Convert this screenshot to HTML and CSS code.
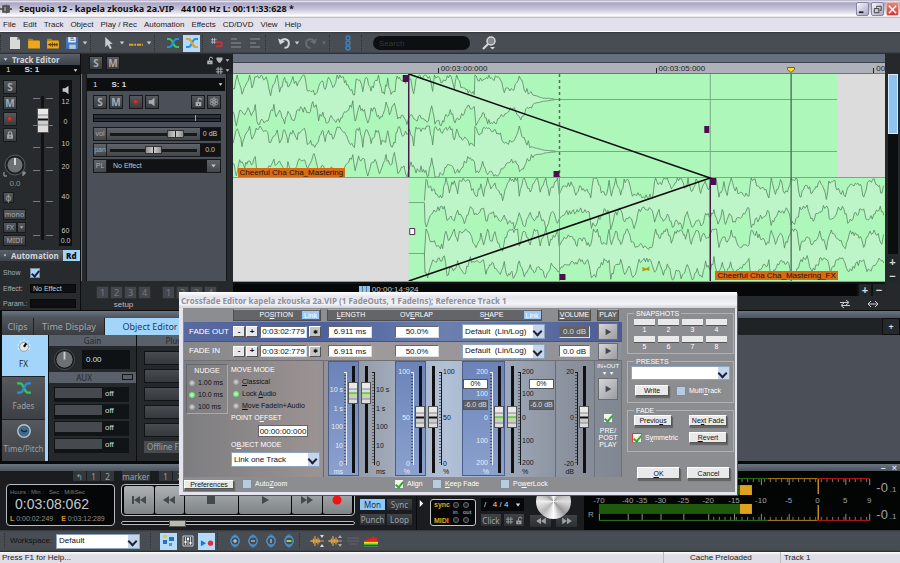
FILE: index.html
```html
<!DOCTYPE html>
<html lang="en">
<head>
<meta charset="utf-8">
<meta name="viewport" content="width=device-width, initial-scale=1">
<title>Sequoia 12 - kapela zkouska 2a.VIP</title>
<link rel="stylesheet" href="styles.css">
</head>
<body>
<svg class="defs" aria-hidden="true">
  <symbol id="i-lock" viewBox="0 0 12 12"><path d="M3 6h7v5H3z" fill="currentColor"/><path d="M6 6V3.500a2 2 0 0 1 4 0V4" fill="none" stroke="currentColor" stroke-width="1.300"/><path d="M6 8h1v1.500H6z" fill="#222"/></symbol>
  <symbol id="i-locked" viewBox="0 0 12 12"><path d="M2.500 5.500h7v5h-7z" fill="currentColor"/><path d="M4 6V4a2 2 0 0 1 4 0v2" fill="none" stroke="currentColor" stroke-width="1.300"/><path d="M5.500 7h1v2h-1z" fill="#222"/></symbol>
  <symbol id="i-speaker" viewBox="0 0 12 12"><path d="M2 4h3l4-3v10L5 8H2z" fill="currentColor"/></symbol>
  <symbol id="i-rec" viewBox="0 0 12 12"><circle cx="6" cy="6" r="3.200" fill="#a32b2b"/><circle cx="5.500" cy="5.500" r="1.500" fill="#c8443e"/></symbol>
  <symbol id="i-cross" viewBox="0 0 14 12"><path d="M1 2h2.500C7 2 7 10 10.500 10H13" fill="none" stroke="#35c95a" stroke-width="2"/><path d="M1 10h2.500C7 10 7 2 10.500 2H13" fill="none" stroke="#2a8fe0" stroke-width="2"/></symbol>
  <symbol id="i-fold" viewBox="0 0 8 8"><path d="M1 2h6L4 6z" fill="currentColor"/></symbol>
  <symbol id="i-grid" viewBox="0 0 10 10"><path d="M3.500 1v8M6.500 1v8M1 3.500h8M1 6.500h8" stroke="currentColor" fill="none"/></symbol>
  <symbol id="i-folder" viewBox="0 0 13 12"><path d="M1 2h4l1 1.500h5V5H1z" fill="#b87a08"/><path d="M1 4h11v7H1z" fill="#eaa81a"/></symbol>
  <symbol id="i-rew" viewBox="0 0 14 10"><path d="M7 1v8L1 5zM13 1v8L7 5z" fill="currentColor"/></symbol>
  <symbol id="i-fwd" viewBox="0 0 14 10"><path d="M1 1v8l6-4zM7 1v8l6-4z" fill="currentColor"/></symbol>
  <symbol id="i-play" viewBox="0 0 10 10"><path d="M2 1v8l7-4z" fill="currentColor"/></symbol>
  <symbol id="i-lens" viewBox="0 0 12 14"><path d="M6 0l4 3H2zM6 14l4-3H2z" fill="#3f83bf"/><circle cx="6" cy="7" r="4.200" fill="#454a51" stroke="#4a94d2" stroke-width="1.400"/></symbol>
  <symbol id="i-wave" viewBox="0 0 14 12"><path d="M0 6h14M2 5v2M3.500 3.500v5M5 1v10M6.500 4v4M8 2.500v7M9.500 4.500v3" stroke="#e0a245" stroke-width="1.200"/></symbol>
</svg>

<div class="app">
  <header class="titlebar">
    <svg class="app-mark" viewBox="0 0 12 12"><path d="M0 6h4M8 6h4M3 3h6v6H3z" stroke="#444" fill="#888" stroke-width="1.500"/><path d="M6 1l5 5-5 5z" fill="#555"/></svg>
    <h1>Sequoia 12 - kapela zkouska 2a.VIP &nbsp; 44100 Hz L: 00:11:33:628 *</h1>
    <div class="window-buttons">
      <button aria-label="Minimize"><svg viewBox="0 0 12 12"><path d="M2 9h5" stroke="#222" stroke-width="2"/></svg></button>
      <button aria-label="Restore"><svg viewBox="0 0 12 12"><path d="M5 4V2.500h5V7H8.500M2.500 5h5v4.500h-5z" stroke="#333" fill="none"/></svg></button>
      <button class="close" aria-label="Close"><svg viewBox="0 0 12 12"><path d="M2 2l8 8M10 2l-8 8" stroke="#fff" stroke-width="1.600"/></svg></button>
    </div>
  </header>
  <nav class="menubar">
    <a href="#">File</a><a href="#">Edit</a><a href="#">Track</a><a href="#">Object</a><a href="#">Play / Rec</a><a href="#">Automation</a><a href="#">Effects</a><a href="#">CD/DVD</a><a href="#">View</a><a href="#">Help</a>
  </nav>

  <div class="toolbar">
    <i class="grip"></i>
    <button aria-label="New"><svg viewBox="0 0 12 14"><path d="M1 1h7l3 3v9H1z" fill="#d9dad8"/><path d="M8 1v3h3z" fill="#8e9092"/></svg></button>
    <button aria-label="Open"><svg viewBox="0 0 13 12"><use href="#i-folder"/></svg></button>
    <button aria-label="Open audio"><svg viewBox="0 0 13 12"><use href="#i-folder"/><path d="M2 7.500h9M4 6v3M6 5.500v4M8 6v3M10 6v3" stroke="#6a4300"/></svg></button>
    <button aria-label="Save"><svg viewBox="0 0 13 13"><path d="M1 1h11v11H1z" fill="#3b78c8"/><path d="M3 1h7v5H3z" fill="#e8edf4"/><path d="M4 8h6v4H4z" fill="#b9c6d6"/><path d="M5 2h3M5 4h4" stroke="#5a6f8c"/></svg></button>
    <svg class="caret" viewBox="0 0 8 8"><use href="#i-fold"/></svg>
    <i class="grip wide"></i>
    <button aria-label="Pointer"><svg viewBox="0 0 12 15"><path d="M2 1v11l2.500-2.500L7 14l2-1-2.300-4.300H10z" fill="#c9ccd0"/></svg></button>
    <svg class="caret" viewBox="0 0 8 8"><use href="#i-fold"/></svg>
    <button aria-label="Range"><svg viewBox="0 0 16 12"><path d="M0 8h16" stroke="#e0a030" stroke-width="2.500" stroke-dasharray="5 1 2 1"/></svg></button>
    <svg class="caret" viewBox="0 0 8 8"><use href="#i-fold"/></svg>
    <i class="grip wide"></i>
    <button aria-label="Crossfade"><svg viewBox="0 0 14 12"><use href="#i-cross"/></svg></button>
    <button class="on" aria-label="Auto crossfade"><svg viewBox="0 0 14 12"><use href="#i-cross"/><path d="M1 2h2.500C7 2 7 10 10.500 10H13" fill="none" stroke="#f0a030" stroke-width="2"/></svg></button>
    <i class="grip"></i>
    <button aria-label="Snap"><svg viewBox="0 0 17 12"><path d="M3 0v7M5.500 0v7M1 2h7M1 5h7" stroke="#b9bcc0" fill="none"/><path d="M7 5h5a2.500 2.500 0 0 1 0 5H7" fill="none" stroke="#cf3137" stroke-width="2.200"/></svg></button>
    <button aria-label="Align left"><svg viewBox="0 0 14 12"><path d="M2 2h6M2 6h10M2 10h10" stroke="#696e74" stroke-width="2"/></svg></button>
    <button aria-label="Align right"><svg viewBox="0 0 14 12"><path d="M2 2h10M2 6h6M2 10h10" stroke="#696e74" stroke-width="2"/></svg></button>
    <i class="grip wide"></i>
    <button aria-label="Undo"><svg viewBox="0 0 14 13"><path d="M1 2l2 6 5-3z" fill="#d4d6d8"/><path d="M3.500 5.500a4.300 4.300 0 1 1 4 5.800" fill="none" stroke="#d4d6d8" stroke-width="2"/></svg></button>
    <svg class="caret" viewBox="0 0 8 8"><use href="#i-fold"/></svg>
    <button aria-label="Redo"><svg viewBox="0 0 14 13"><path d="M13 2l-2 6-5-3z" fill="#676c72"/><path d="M10.500 5.500a4.300 4.300 0 1 0-4 5.800" fill="none" stroke="#676c72" stroke-width="2"/></svg></button>
    <svg class="caret off" viewBox="0 0 8 8"><use href="#i-fold"/></svg>
    <i class="grip wide"></i>
    <svg class="chain" viewBox="0 0 6 16"><g fill="none" stroke="#3e83bd" stroke-width="1.400"><circle cx="3" cy="3" r="2"/><circle cx="3" cy="8" r="2"/><circle cx="3" cy="13" r="2"/></g></svg>
    <i class="grip spaced"></i>
    <input class="search" type="search" placeholder="Search" aria-label="Search">
    <button aria-label="Find"><svg viewBox="0 0 14 14"><circle cx="9" cy="5" r="4" fill="#85898d" stroke="#d5d7d9" stroke-width="1.500"/><path d="M6 8l-5 5" stroke="#d5d7d9" stroke-width="2.200"/><path d="M8 11h5l-2.500 2.500z" fill="#d5d7d9"/></svg></button>
  </div>

  <main class="workspace">
    <aside class="track-editor">
      <h2 class="bar"><svg viewBox="0 0 8 8"><use href="#i-fold"/></svg>Track Editor</h2>
      <div class="track-pick"><span>1</span><b>S: 1</b><svg viewBox="0 0 8 8"><use href="#i-fold"/></svg></div>
      <div class="strip">
        <div class="strip-keys">
          <button class="key">S</button><button class="key">M</button>
          <button class="key" aria-label="Record"><svg viewBox="0 0 12 12"><use href="#i-rec"/></svg></button>
          <button class="key" aria-label="Lock"><svg viewBox="0 0 12 12"><use href="#i-locked"/></svg></button>
          <svg class="knob" viewBox="0 0 24 24"><circle cx="12" cy="11" r="10" fill="#1d2022" stroke="#5a5e62"/><circle cx="12" cy="11" r="7.500" fill="#6e7174"/><path d="M12 4v7" stroke="#d8dadc" stroke-width="2"/><path d="M1 18v4h3M20 22v-4h2v2h-2" stroke="#aaa" fill="none"/></svg>
          <output>0.0</output>
          <button class="key small">φ</button>
          <button class="key text">mono</button>
          <span class="pair"><button class="key text">FX</button><button class="key text" aria-label="FX menu"><svg viewBox="0 0 8 8"><use href="#i-fold"/></svg></button></span>
          <button class="key text">MIDI</button>
        </div>
        <div class="strip-fader"><input class="vr big" type="range" value="90" aria-label="Track volume"></div>
        <div class="strip-meter"><svg viewBox="0 0 12 12"><use href="#i-speaker"/></svg><span>12</span><span>0</span><span>10</span><span>20</span><span>40</span><span>60</span><span>0.0</span></div>
      </div>
      <h2 class="bar auto"><svg viewBox="0 0 8 8"><use href="#i-fold"/></svg>Automation<b>Rd</b></h2>
      <div class="auto-rows">
        <label for="show">Show</label><input class="tick blue" id="show" type="checkbox" checked>
        <label for="effect">Effect:</label><input class="dark" id="effect" type="text" value="No Effect">
        <label for="param">Param.:</label><input class="dark" id="param" type="text">
      </div>
    </aside>

    <section class="track-list">
      <div class="list-top"><button class="key">S</button><button class="key">M</button>
        <div class="list-icons"><svg viewBox="0 0 12 12"><use href="#i-lock"/></svg><svg viewBox="0 0 12 12"><path d="M2 2h8v3L7 9H5L2 5z" fill="currentColor"/></svg><svg viewBox="0 0 8 8"><use href="#i-fold"/></svg><span></span><svg viewBox="0 0 10 10"><use href="#i-grid"/></svg><svg viewBox="0 0 8 8"><use href="#i-fold"/></svg></div>
      </div>
      <div class="track-area">
      <article class="track">
        <div class="track-pick"><span>1</span><b>S: 1</b><svg viewBox="0 0 8 8"><use href="#i-fold"/></svg></div>
        <div class="track-body">
          <div class="track-keys">
            <button class="key">S</button><button class="key">M</button>
            <button class="key gap" aria-label="Record"><svg viewBox="0 0 12 12"><use href="#i-rec"/></svg></button>
            <button class="key" aria-label="Monitor"><svg viewBox="0 0 12 12"><use href="#i-speaker"/></svg></button>
            <button class="key end" aria-label="Lock"><svg viewBox="0 0 12 12"><use href="#i-lock"/></svg></button>
            <button class="key" aria-label="Freeze"><svg viewBox="0 0 12 12"><g fill="none" stroke="currentColor"><circle cx="6" cy="6" r="1.500"/><circle cx="6" cy="2.500" r="1.500"/><circle cx="6" cy="9.500" r="1.500"/><circle cx="3" cy="4.200" r="1.500"/><circle cx="9" cy="4.200" r="1.500"/><circle cx="3" cy="7.800" r="1.500"/><circle cx="9" cy="7.800" r="1.500"/></g></svg></button>
          </div>
          <div class="level"></div>
          <div class="param"><label for="vol">vol</label><input class="hr" id="vol" type="range" value="79"><output>0 dB</output></div>
          <div class="param"><label for="pan">pan</label><input class="hr" id="pan" type="range" value="50"><output>0.0</output></div>
          <div class="param fx"><label for="pl">PL</label><select id="pl"><option>No Effect</option></select><svg viewBox="0 0 8 8"><use href="#i-fold"/></svg></div>
        </div>
      </article>
      </div>
      <div class="setups"><div><button>1</button><button>2</button><button>3</button><button>4</button><span>setup</span></div><div><button>1</button><button>2</button><button>3</button><button>4</button></div></div>
    </section>

    <section class="arrange">
      <div class="overview-bar"></div>
      <div class="ruler"><span>00:03:00:000</span><span>00:03:05:000</span><span>00</span></div>
      <div class="lanes">
        <svg viewBox="0 0 653 207" preserveAspectRatio="none">
          <path class="clip" d="M0 0h605v103H0zM176 104h477v103H176z"/>
          <g id="waves"></g>
          <path class="thin" d="M320 25.500h285M320 77.500h285M176 128.500h16M176 179.500h16M478 0v104M0 103.500h653"/>
          <path class="dashes" d="M327 0v103"/>
          <path class="thin" d="M327 104v103"/>
          <path class="cut" d="M176 0v103M478 104v103"/>
          <path class="fade" d="M176 0L478 104L176 207"/>
          <path class="play" d="M559 0v207"/>
          <path class="grab" d="M170 1h6v7h-6zM321 97h6v6h-6zM472 52h5v7h-5zM478 104h6v7h-6zM327 200h6v6h-6z"/>
          <path d="M177 154.500h5v6h-5z" fill="#fff" stroke="#57285a"/>
          <path d="M410 193l4 1.500 3-2.500v5l-3-1-4 1.500z" fill="#b69b10"/>
        </svg>
        <span class="clip-name first">Cheerful Cha Cha_Mastering</span>
        <span class="clip-name second">Cheerful Cha Cha_Mastering_FX</span>
        <svg class="cursor" viewBox="0 0 8 6"><path d="M.5.5h7v2l-3.500 3-3.500-3z" fill="#f2e41c" stroke="#55500a" stroke-width=".8"/></svg>
      </div>
      <div class="h-scroll"><div class="scroll-well"><i></i><span>00:00:14:924</span></div><button aria-label="Zoom in">+</button><button aria-label="Zoom out">−</button></div>
      <div class="h-tools"><svg viewBox="0 0 12 8"><path d="M1 2.500h8M7 0l3 2.500L7 5M11 5.500H3M5 3L2 5.500 5 8" fill="none" stroke="#ccc"/></svg><svg viewBox="0 0 12 8"><path d="M2 4h8M4 1L1 4l3 3M8 1l3 3-3 3" fill="none" stroke="#ccc"/></svg></div>
    </section>
    <div class="v-scroll"><div class="v-well"><i></i></div><button aria-label="Taller tracks">+</button><button aria-label="Shorter tracks">−</button></div>
  </main>

  <section class="dock">
    <div class="dock-bar"></div>
    <div class="tabs"><button>Clips</button><button class="t-time">Time Display</button><button class="on">Object Editor</button><button class="add" aria-label="Add tab">+</button></div>
    <div class="editor">
      <nav class="side">
        <a class="on" href="#"><svg viewBox="0 0 18 18"><g fill="#d7f0ff"><circle cx="3" cy="12" r="1"/><circle cx="2.500" cy="8" r="1"/><circle cx="5" cy="4" r="1"/><circle cx="9" cy="2.500" r="1"/><circle cx="13" cy="4" r="1"/><circle cx="15.500" cy="8" r="1"/><circle cx="15" cy="12" r="1"/></g><circle cx="9" cy="10" r="5" fill="#e9e9e9" stroke="#999"/><path d="M9 10l2.500-4" stroke="#111" stroke-width="2.500"/></svg>FX</a>
        <a href="#"><svg viewBox="0 0 14 12"><use href="#i-cross"/></svg>Fades</a>
        <a href="#"><svg viewBox="0 0 18 18"><circle cx="9" cy="9" r="7" fill="#3f6a8c" stroke="#b7c0c8" stroke-width="1.600"/><path d="M5.500 7.500L9 10l3.500-1.500" stroke="#16222c" fill="none" stroke-width="1.400"/></svg>Time/Pitch</a>
      </nav>
      <div class="col gain">
        <h3>Gain</h3>
        <div class="gain-row"><svg class="knob" viewBox="0 0 24 24"><circle cx="12" cy="12" r="10.500" fill="#15181a" stroke="#4a4e52"/><circle cx="12" cy="12" r="8.500" fill="#6e7174"/><path d="M12 4v8" stroke="#c8cacc" stroke-width="2"/></svg><output>0.00</output></div>
        <h3>AUX<i></i></h3>
        <div class="slots"><div>off</div><div>off</div><div>off</div><div>off</div></div>
      </div>
      <div class="col plug">
        <h3>Plug-ins</h3>
        <div class="slots plain"><div></div><div></div><div></div><div></div><div></div><button>Offline FX</button></div>
      </div>
    </div>
  </section>

  <section class="transport">
    <div class="dock-bar slim"><span>–</span><span>×</span></div>
    <div class="transport-body">
      <div class="deck">
        <div class="marks"><button>↰</button><button>1</button><button>2</button><button class="gap">marker</button><button class="step">1</button><button>2</button></div>
        <div class="deck-row">
          <div class="clock"><small>Hours : Min : &nbsp; Sec : MilliSec</small><strong>0:03:08:062</strong><p><b>L</b> 0:00:02:249 <b class="e">E</b> 0:03:12:289</p></div>
          <div class="drive">
            <div class="drive-keys">
              <button aria-label="To start"><svg viewBox="0 0 16 10"><path d="M1 1h2v8H1zM9 1v8L3 5zM15 1v8L9 5z" fill="currentColor"/></svg></button>
              <button aria-label="Rewind"><svg viewBox="0 0 14 10"><use href="#i-rew"/></svg></button>
              <button class="w" aria-label="Stop"><svg viewBox="0 0 10 10"><path d="M1 1h8v8H1z" fill="currentColor"/></svg></button>
              <button class="w" aria-label="Play"><svg viewBox="0 0 10 10"><use href="#i-play"/></svg></button>
              <button aria-label="Forward"><svg viewBox="0 0 14 10"><use href="#i-fwd"/></svg></button>
              <button aria-label="Record"><svg viewBox="0 0 10 10"><circle cx="5" cy="5" r="4.500" fill="#f21310"/></svg></button>
            </div>
            <input class="jog" type="range" value="22" aria-label="Position">
          </div>
        </div>
      </div>
      <div class="modes"><button class="on">Mon</button><button>Sync</button><button>Punch</button><button>Loop</button></div>
      <div class="rule"><svg viewBox="0 0 8 8"><path d="M2 0v8l4-4z" fill="#fff"/></svg></div>
      <div class="sync"><b>sync</b><i></i><i></i><span></span><small>in</small><small>out</small><b>MIDI</b><i></i><i></i></div>
      <div class="tempo"><div class="sig"><span>/</span><span>4 / 4</span><svg viewBox="0 0 8 8"><use href="#i-fold"/></svg></div><button>Click</button><button aria-label="Grid lock"><svg viewBox="0 0 10 10"><use href="#i-grid"/></svg><svg viewBox="0 0 12 12"><use href="#i-lock"/></svg></button></div>
      <div class="wheel"><i></i><button aria-label="Jog back"><svg viewBox="0 0 14 10"><use href="#i-rew"/></svg></button><button aria-label="Jog forward"><svg viewBox="0 0 14 10"><use href="#i-fwd"/></svg></button></div>
      <div class="meters"><svg id="meters" viewBox="0 0 318 57" preserveAspectRatio="xMinYMid meet"></svg></div>
    </div>
  </section>

  <div class="toolbar lower">
    <i class="grip"></i>
    <label for="workspace">Workspace:</label>
    <span class="combo ws"><select id="workspace"><option>Default</option></select></span>
    <i class="grip wide"></i>
    <button class="on" aria-label="Tracks view"><svg viewBox="0 0 14 14"><path d="M1 1h4v3H1z" fill="#e8d020"/><path d="M1 6h4v4H1zM7 3h5v4H7z" fill="#2a6fc0"/><path d="M7 9h3v3H7z" fill="#888"/></svg></button>
    <button aria-label="Mixer"><svg viewBox="0 0 14 14"><path d="M2 2h10v10H2z" fill="none" stroke="#c9ccd0"/><path d="M4.500 3v8M7 3v8M9.500 3v8" stroke="#c9ccd0"/><path d="M3.500 8h2M6 5h2M8.500 9h2" stroke="#fff" stroke-width="2"/></svg></button>
    <button class="on" aria-label="Transport"><svg viewBox="0 0 16 14"><path d="M1 6v7l6-3.500z" fill="#1b74d0"/><circle cx="12" cy="9.500" r="3" fill="#e02d36"/></svg></button>
    <i class="grip wide"></i>
    <button class="sp" aria-label="Zoom in"><svg viewBox="0 0 12 14"><use href="#i-lens"/><path d="M4 7h4M6 5v4" stroke="#cfe4f4"/></svg></button>
    <button class="sp" aria-label="Zoom out"><svg viewBox="0 0 12 14"><use href="#i-lens"/><path d="M4 7h4" stroke="#cfe4f4"/></svg></button>
    <button class="sp" aria-label="Zoom one"><svg viewBox="0 0 12 14"><use href="#i-lens"/><path d="M6 5v4" stroke="#cfe4f4"/></svg></button>
    <button class="sp" aria-label="Zoom all"><svg viewBox="0 0 12 14"><use href="#i-lens"/><path d="M3.500 6h5v2h-5z" fill="#9bcf54"/></svg></button>
    <i class="grip wide"></i>
    <button class="sp" aria-label="Wave smaller"><svg viewBox="0 0 14 12"><use href="#i-wave"/><path d="M10 0h4l-2 3zM10 12h4l-2-3z" fill="#ddd"/></svg></button>
    <button class="sp" aria-label="Wave larger"><svg viewBox="0 0 14 12"><use href="#i-wave"/><path d="M10 3h4l-2-3zM10 9h4l-2 3z" fill="#aaa"/></svg></button>
    <button class="sp" aria-label="Lines"><svg viewBox="0 0 14 12"><path d="M1 3h12M1 6h12M3 9h8" stroke="#62676d"/></svg></button>
    <button class="sp" aria-label="Spectrum"><svg viewBox="0 0 16 12"><path d="M0 12V6l2-2 1 2 2-4 1 3 2-4 1 3 2-5 1 4 2-1 2 4v6z" fill="#e8261c"/><path d="M0 12V7h16v5z" fill="#f5df1e"/><path d="M0 9h16v3H0z" fill="#36c02c"/><path d="M0 10.500h16V12H0z" fill="#2440e0"/></svg></button>
  </div>
  <footer class="status"><span>Press F1 for Help...</span><span class="cache">Cache Preloaded</span><span class="now">Track 1</span></footer>
</div>

<div class="dialog" role="dialog" aria-labelledby="dlg-title">
  <h2 id="dlg-title">Crossfade Editor kapela zkouska 2a.VIP (1 FadeOuts, 1 FadeIns); Reference Track 1</h2>
  <form class="dlg-body" onsubmit="return false">
    <div class="dlg-main">
      <div class="dlg-grid heads"><div class="h pos"><span>PO<u>S</u>ITION</span><button>Link</button></div><div class="h len"><span><u>L</u>ENGTH</span><span>OV<u>E</u>RLAP</span><span>S<u>H</u>APE</span><button>Link</button></div><div class="h"><span><u>V</u>OLUME</span></div><div class="h"><span>PLAY</span></div></div>
      <div class="dlg-grid row out">
        <div class="where"><b>FADE OUT</b><button>-</button><button>+</button><input type="text" value="0:03:02:779" aria-label="Fade out position"><button>✱</button></div>
        <input type="text" value="6.911 ms" aria-label="Fade out length"><input type="text" value="50.0%" aria-label="Fade out overlap">
        <span class="combo"><select aria-label="Fade out shape"><option>Default &nbsp;(Lin/Log)</option></select></span>
        <input class="grey" type="text" value="0.0 dB" aria-label="Fade out volume">
        <button class="playkey" aria-label="Play fade out"><svg viewBox="0 0 10 10"><use href="#i-play"/></svg></button>
      </div>
      <div class="dlg-grid row">
        <div class="where"><b>FADE IN</b><button>-</button><button>+</button><input type="text" value="0:03:02:779" aria-label="Fade in position"><button>✱</button></div>
        <input type="text" value="6.911 ms" aria-label="Fade in length"><input type="text" value="50.0%" aria-label="Fade in overlap">
        <span class="combo"><select aria-label="Fade in shape"><option>Default &nbsp;(Lin/Log)</option></select></span>
        <input type="text" value="0.0 dB" aria-label="Fade in volume">
        <button class="playkey" aria-label="Play fade in"><svg viewBox="0 0 10 10"><use href="#i-play"/></svg></button>
      </div>
      <div class="dlg-grid controls">
        <div class="modes-col">
          <div class="nudge" role="group" aria-label="Nudge"><b>NUDGE</b><label><input type="radio" name="n">1.00 ms</label><label><input type="radio" name="n" checked>10.0 ms</label><label><input type="radio" name="n">100 ms</label></div>
          <div class="move"><b>MOVE MODE</b><label><input type="radio" name="m"><span><u>C</u>lassical</span></label><label><input type="radio" name="m" checked><span>Lock <u>A</u>udio</span></label><label><input type="radio" name="m"><span><u>M</u>ove FadeIn+Audio</span></label>
            <label class="cap" for="offset">POINT O<u>F</u>FSET</label><input id="offset" type="text" value="00:00:00:000">
            <label class="cap" for="omode">O<u>B</u>JECT MODE</label><span class="combo"><select id="omode"><option>Link one Track</option></select></span></div>
        </div>
        <div class="faders">
          <div class="fbox blue"><div class="scale"><span></span><span>10 s</span><span>1 s</span><span>100</span><span>10</span><span>0</span><em>ms</em></div><i class="ticks"></i><input class="vr" type="range" value="81" aria-label="Out length"></div>
          <div class="fbox"><input class="vr" type="range" value="81" aria-label="In length"><i class="ticks"></i><div class="scale"><span></span><span>10 s</span><span>1 s</span><span>100</span><span>10</span><span>0</span><em>ms</em></div></div>
        </div>
        <div class="faders">
          <div class="fbox blue"><div class="scale"><span>100</span><span>50</span><span>0</span><em>%</em></div><i class="ticks"></i><input class="vr plain" type="range" value="53" aria-label="Out overlap"></div>
          <div class="fbox"><input class="vr plain" type="range" value="53" aria-label="In overlap"><i class="ticks"></i><div class="scale"><span>100</span><span>50</span><span>0</span><em>%</em></div></div>
        </div>
        <div class="faders shape">
          <div class="fbox blue"><div class="scale"><span>200</span><output>0%</output><span>100</span><output class="db">-6.0 dB</output><span>0</span><span>100</span><span>200</span><em>%</em></div><i class="ticks"></i><input class="vr" type="range" value="53" aria-label="Out shape"></div>
          <div class="fbox"><input class="vr" type="range" value="53" aria-label="In shape"><i class="ticks"></i><div class="scale"><span>200</span><output>0%</output><span>100</span><output class="db">-6.0 dB</output><span>0</span><span>100</span><span>200</span><em>%</em></div></div>
        </div>
        <div class="faders volume"><div class="fbox"><div class="scale"><span>20</span><span>0</span><span>-20</span><em>dB</em></div><i class="ticks"></i><input class="vr plain" type="range" value="53" aria-label="Volume"></div></div>
        <div class="preview"><small>IN+OUT<br>▾ &nbsp;▾</small><button class="playkey" aria-label="Play both"><svg viewBox="0 0 10 10"><use href="#i-play"/></svg></button><input class="tick" id="prepost" type="checkbox" checked><label for="prepost">PRE/<br>POST<br>PLAY</label></div>
      </div>
      <div class="dlg-foot"><button class="btn">Preferences</button><label class="f-zoom"><input class="tick" type="checkbox"><span>Auto<u>Z</u>oom</span></label><label class="f-align"><input class="tick" type="checkbox" checked><span>Align</span></label><label class="f-keep"><input class="tick" type="checkbox"><span><u>K</u>eep Fade</span></label><label class="f-power"><input class="tick" type="checkbox"><span>Po<u>w</u>erLock</span></label></div>
    </div>
    <div class="dlg-side">
      <fieldset class="snaps"><legend>SNAPSHOTS</legend><button>1</button><button>2</button><button>3</button><button>4</button><button>5</button><button>6</button><button>7</button><button>8</button></fieldset>
      <fieldset class="presets"><legend>PRESETS</legend><span class="combo"><select aria-label="Preset"><option> </option></select></span><button class="btn">Write</button><label><input class="tick" type="checkbox"><span>Multi<u>T</u>rack</span></label></fieldset>
      <fieldset class="fades"><legend>FADE</legend><button class="btn">Previo<u>u</u>s</button><button class="btn">Ne<u>x</u>t Fade</button><label><input class="tick red" type="checkbox" checked><span>S<u>y</u>mmetric</span></label><button class="btn"><u>R</u>evert</button></fieldset>
      <div class="ends"><button class="btn"><u>O</u>K</button><button class="btn">Cancel</button></div>
    </div>
  </form>
</div>
<script src="app.js"></script>
</body>
</html>
```
FILE: styles.css
```css
* { box-sizing: border-box; }
body { margin: 0; background: #101214; font-family: "Liberation Sans", Arial, sans-serif; font-size: 8px; line-height: 10px; color: #c4c7ca; }
button, input, select, output { font: inherit; color: inherit; margin: 0; padding: 0; border: 0; border-radius: 0; background: none; min-width: 0; }
h1, h2, h3, p { margin: 0; font-size: inherit; }
svg { display: block; }
a { color: inherit; text-decoration: none; }
select { appearance: none; outline: 0; }
.defs { position: absolute; width: 0; height: 0; }
.app { display: flex; flex-direction: column; min-height: 100vh; }

.titlebar { display: flex; align-items: center; height: 18px; padding: 0 1px 0 0; background: linear-gradient(#8c88a4 0, #f2f1f8 1px, #aaa6c4 3px, #c6c4d8 9px, #fff 16px, #a9a9b6 18px); color: #111; }
.app-mark { width: 12px; height: 12px; margin-right: 7px; }
.titlebar h1 { flex: 1; font: bold 9px/16px "Noto Sans", sans-serif; white-space: nowrap; }
.window-buttons { display: flex; gap: 2px; }
.window-buttons button { width: 13px; height: 14px; border: 1px solid #8784a4; border-radius: 2px; background: linear-gradient(135deg, #f5f5fb, #a9a8c4); }
.window-buttons .close { background: linear-gradient(#ea8374, #cc3a34); border-color: #e9b5b0; }
.menubar { display: flex; align-items: center; gap: 7px; height: 14px; padding: 0 3px; background: #e2e1eb; border-bottom: 1px solid #fff; color: #222; }

.toolbar { display: flex; align-items: center; height: 22px; gap: 2px; background: linear-gradient(#33373b 0, #484d53 2px, #484d53 20px, #24272a); color: #ccc; }
.toolbar button { display: grid; place-items: center; width: 17px; height: 17px; }
.toolbar button svg { width: 14px; height: 14px; }
.toolbar .on { background: #b4dcfa; }
.toolbar .caret { width: 6px; height: 6px; }
.toolbar .off { color: #676c72; }
.toolbar .grip { width: 4px; height: 16px; border-left: 1px dotted #2d3034; }
.toolbar .grip.wide { width: 8px; }
.toolbar .grip.spaced { width: 8px; margin: 0 2px 0 8px; }
.toolbar .chain { width: 6px; height: 16px; margin-left: 6px; }
.toolbar .search { width: 97px; height: 14px; padding: 0 6px; border-radius: 7px; background: #0d1013; margin-right: 8px; }
.search::placeholder { color: #33373b; opacity: 1; }
.toolbar .sp { width: 16px; }
.lower { padding-left: 4px; }
.lower label { margin-right: 2px; color: #101214; }
.lower .ws { margin-right: 8px; }

.workspace { display: flex; flex: 1; min-height: 256px; }
.bar { display: flex; align-items: center; height: 11px; gap: 4px; padding-left: 3px; background: linear-gradient(#59606a, #3c4249); font: bold 8px/11px "Noto Sans", sans-serif; color: #d2d5d8; }
.bar svg { width: 5px; height: 5px; }
.track-editor { width: 81px; background: #282b2e; border-right: 1px solid #0c0d0e; display: flex; flex-direction: column; overflow: hidden; height: 256px; }
.track-pick { display: flex; align-items: center; height: 13px; padding: 0 2px 0 6px; gap: 14px; background: #0c0e10; color: #ddd; }
.track-pick svg { width: 5px; height: 5px; margin-left: auto; }
.strip { display: flex; height: 181px; padding: 5px 8px 4px 3px; gap: 6px; }
.key { display: grid; place-items: center; width: 14px; height: 14px; font: bold 10px/12px "Noto Sans", sans-serif; color: #a6abb0; border: 1px solid #17191b; background: linear-gradient(#56595d, #383b3f); }
.key svg { width: 10px; height: 10px; }
.strip-keys { display: flex; flex-direction: column; gap: 2px; width: 24px; }
.strip-keys .knob { width: 24px; height: 24px; margin-top: 10px; }
.strip-keys output { line-height: 8px; text-align: center; color: #8b9095; }
.strip-keys .small { width: 11px; height: 11px; margin: 2px 0 4px; font: 8px/9px "Noto Sans", sans-serif; }
.key.text { width: 23px; height: 11px; font: 7px/9px "Noto Sans", sans-serif; }
.pair { display: flex; }
.pair .text { width: 14px; }
.pair .text + .text { width: 9px; }
.pair svg { width: 5px; height: 5px; }
.strip-fader { --t: linear-gradient(90deg, #777b80 7px, transparent 7px 13px, #777b80 13px); width: 20px; padding: 16px 4px 0; display: flex; justify-content: center; background: var(--t) 0 18px / 100% 1px, var(--t) 0 45px / 100% 1px, var(--t) 0 67px / 100% 1px, var(--t) 0 90px / 100% 1px, var(--t) 0 121px / 100% 1px, var(--t) 0 155px / 100% 1px; background-repeat: no-repeat; }
.strip-meter { display: grid; grid-template-rows: 17px 9px 20px 22px 23px 30px 34px 10px; align-items: end; justify-items: center; width: 17px; background: #0d0f11; font-size: 7px; line-height: 8px; }
.strip-meter svg { width: 10px; height: 14px; }
.bar.auto { padding-right: 0; }
.bar b { margin-left: auto; width: 22px; text-align: center; background: #a3d5fb; color: #111; }
.auto-rows { display: grid; grid-template-columns: 24px 46px; gap: 6px 3px; padding: 7px 3px; font-size: 7px; line-height: 9px; color: #a9adb1; }
.dark { height: 9px; padding: 0 2px; background: #0d0f11; border: 1px solid #080808; color: #ccc; }
.tick { appearance: none; flex: none; display: grid; place-items: center; width: 10px; height: 10px; background: #b7ccde; border: 1px solid #7e8c99; }
.tick:checked { background: #f0f5ea; }
.tick:checked::before { content: ""; width: 3px; height: 6px; border: solid #3aa52c; border-width: 0 2px 2px 0; rotate: 40deg; }
.tick.blue { background: #a3d5fb; }
.tick.blue:checked::before { border-color: #223; }
.tick.red { border-top-color: #e33; border-left-color: #e33; }

.track-list { width: 152px; display: flex; flex-direction: column; background: #26292c; }
.list-top { display: flex; gap: 3px; height: 20px; padding: 2px 1px 4px 8px; background: #1e2124; }
.list-icons { margin-left: auto; display: grid; grid-template-columns: 9px 9px 7px; gap: 1px; color: #b4b8bc; align-items: center; }
.list-icons svg { width: 9px; height: 9px; }
.list-icons svg:nth-child(3n) { width: 5px; height: 5px; }
.track-area { flex: 1; display: flex; border-left: 1px solid #c85a1e; padding: 0 6px 0 4px; }
.track { flex: 1; min-width: 0; padding: 4px 1px 0 0; background: #4b5058; border: solid #14161a; border-width: 0 1px; }
.track .track-pick { padding-left: 6px; }
.track-body { display: flex; flex-direction: column; gap: 2px; padding: 4px 4px 0 6px; }
.track-keys { display: flex; gap: 2px; margin-bottom: 3px; }
.track-keys .gap { margin-left: 4px; }
.track-keys .end { margin-left: auto; }
.level { height: 8px; margin-bottom: 3px; border: 1px solid #0c0d0e; background: linear-gradient(90deg, transparent 80%, #e0a020 80% 81%, #3a2024 81%), linear-gradient(#202830 2px, #0c0e12 2px 4px, #202830 4px); }
.level { background: linear-gradient(90deg, transparent 80%, #e0a020 80% 81%, transparent 81%), linear-gradient(#28303a 3px, #0c0e12 3px 4px, #28303a 4px); }
.param { display: flex; height: 14px; border: 1px solid #17191b; background: linear-gradient(#60646a, #43474c); font-size: 7px; line-height: 12px; }
.param label { width: 13px; text-align: center; border-right: 1px solid #1a1c1e; color: #a4a8ac; }
.param output { width: 20px; text-align: center; background: #101215; }
.param.fx select { flex: 1; padding-left: 6px; background: #101215; }
.param.fx svg { width: 13px; height: 12px; padding: 3px; }
.hr { appearance: none; flex: 1; height: 12px; background: linear-gradient(#16181a, #16181a) 50% 50% / calc(100% - 6px) 3px no-repeat; }
.hr::-webkit-slider-thumb { appearance: none; width: 17px; height: 8px; border: 1px solid #333; background: linear-gradient(90deg, #8f8f8f, #c9c9c9 45%, #222 45% 55%, #c9c9c9 55%, #8f8f8f); }
.setups { display: flex; gap: 11px; height: 29px; padding: 5px 15px 0; color: #8f9398; }
.setups div { display: grid; grid-template-columns: repeat(4, 13px); gap: 1px; align-content: start; text-align: center; }
.setups button { height: 13px; background: #43474c; border: 1px solid #2d3033; font: 9px/11px "Noto Sans", sans-serif; color: #767b80; }
.setups span { grid-column: 1 / -1; line-height: 9px; color: #b9bcc0; }

.arrange { flex: 1; min-width: 0; display: flex; flex-direction: column; background: #101214; }
.overview-bar { height: 9px; background: #66707e; border-bottom: 1px solid #3d444e; }
.ruler { display: flex; height: 11px; overflow: hidden; padding-left: 31.4%; background: #aeb1b9; border-bottom: 1px solid #c85a1e; color: #222; line-height: 11px; }
.ruler span { flex: none; width: 48.7%; padding-left: 3px; background: linear-gradient(#222, #222) 0 100% / 1px 5px no-repeat; }
.lanes { position: relative; height: 208px; background: #dcdcdc; border-bottom: 1px solid #d4845c; }
.lanes svg { width: 100%; height: 207px; }
.lanes .cursor { position: absolute; left: 85%; top: -7px; width: 8px; height: 6px; }
.clip { fill: #aef7ba; }
.thin { fill: none; stroke: #7aa884; }
.wave { fill: none; stroke: #588562; stroke-width: .8; }
.band { fill: #bef5c8; }
.dashes { stroke: #5d6a60; stroke-width: 1.500; stroke-dasharray: 3 3; }
.cut { stroke: #4a1a4e; stroke-width: 1.500; }
.fade { fill: none; stroke: #0a0a0a; stroke-width: 1.500; }
.play { stroke: #4a6a52; stroke-width: 1.300; }
.grab { fill: #4d0d50; }
.clip-name { position: absolute; padding: 0 2px; height: 9px; line-height: 9px; background: #d86a12; color: #1c1206; white-space: nowrap; }
.clip-name.first { left: .7%; bottom: 104px; }
.clip-name.second { left: 74%; bottom: 1px; }
.h-scroll { display: flex; height: 14px; padding-top: 2px; gap: 2px; }
.scroll-well { flex: 1; display: flex; align-items: center; gap: 2px; padding-left: 19.3%; background: #060708; }
.scroll-well i { width: 11px; height: 8px; background: repeating-linear-gradient(90deg, #8ec4ee 0 3px, #4b7ba4 3px 4px); }
.h-scroll button, .v-scroll button { width: 12px; height: 12px; background: #24272a; color: #d5d7d9; font: bold 11px/10px "Liberation Sans", sans-serif; }
.h-tools { display: flex; flex: 1; justify-content: flex-end; align-items: flex-start; gap: 16px; padding: 4px 6px 0; background: #26292c; }
.h-tools svg { width: 12px; height: 8px; }
.v-scroll { display: flex; flex-direction: column; align-items: center; width: 15px; padding-top: 20px; gap: 2px; background: #26292c; }
.v-well { width: 10px; height: 180px; background: #0b0d0f; }
.v-well i { display: block; height: 60px; border: 1px solid #d6ebfb; background: #8ec4f0; }

.dock { background: #4b5058; border-left: 2px solid #0a0b0c; }
.dock-bar { height: 8px; background: linear-gradient(#6a7480, #4b535d); border-top: 1px solid #0a0b0c; }
.tabs { display: flex; gap: 1px; height: 17px; background: #202326; font: 9px/16px "Noto Sans", sans-serif; }
.tabs button { width: 31px; background: linear-gradient(#505458, #3a3e42); color: #a0a5aa; }
.tabs .t-time { width: 70px; }
.tabs .on { width: 90px; background: #a3d5fb; color: #20405c; }
.tabs .add { width: 18px; margin-left: auto; background: #26292c; border: 1px solid #0c0d0e; color: #ddd; font-weight: bold; }
.editor { display: flex; height: 126px; }
.side { display: flex; flex-direction: column; width: 46px; border-right: 3px solid #a3d5fb; background: #222; gap: 1px; }
.side a { display: flex; flex: 1; flex-direction: column; align-items: center; gap: 3px; padding-top: 2px; background: linear-gradient(#55595e, #3d4145); color: #9ba0a5; font: 8px/12px "Noto Sans", sans-serif; }
.side svg { width: 18px; height: 18px; padding: 1px; }
.side .on { background: #a3d5fb; color: #222; }
.col { display: flex; flex-direction: column; background: #26292c; border-left: 1px solid #0c0d0e; }
.col h3 { height: 11px; background: #59606a; color: #24282c; font: 8px/11px "Noto Sans", sans-serif; text-align: center; }
.col h3 i { float: right; width: 11px; height: 6px; margin: 2px 3px; border: 1px solid #16181a; }
.gain { width: 88px; }
.gain-row { display: flex; align-items: center; gap: 6px; height: 26px; padding: 0 6px 0 4px; }
.gain-row .knob { width: 23px; height: 23px; }
.gain-row output { flex: 1; height: 19px; padding-left: 4px; line-height: 19px; background: #0f1214; color: #c6e0f2; }
.slots { display: flex; flex-direction: column; gap: 2px; padding: 4px 7px 0 5px; }
.slots div { height: 15px; padding-left: 50px; background: linear-gradient(90deg, #464a4e 47px, #111416 47px); border: 1px solid #111416; border-bottom-width: 4px; line-height: 11px; color: #ddd; }
.plug { width: 88px; }
.slots.plain { gap: 4px; padding: 5px 7px; }
.slots.plain div { height: 14px; background: linear-gradient(#484c50, #35383c); border-bottom-width: 1px; }
.slots button { height: 12px; padding-left: 3px; background: #484c50; color: #9ba0a5; font: 8px/12px "Noto Sans", sans-serif; text-align: left; }

.transport { border-top: 2px solid #0a0b0c; background: #1a1c1f; }
.dock-bar.slim { display: flex; justify-content: flex-end; align-items: center; gap: 6px; padding-right: 3px; color: #d8dadd; font: bold 9px/6px "Liberation Sans", sans-serif; }
.transport-body { display: flex; height: 59px; }
.deck { width: 355px; padding: 0 0 0 6px; }
.marks { display: flex; gap: 1px; height: 10px; padding-left: 67px; }
.marks button { width: 13px; background: #33373a; color: #9da2a7; font: 8px/9px "Noto Sans", sans-serif; }
.marks .gap { width: 28px; margin-left: 7px; }
.marks .step { margin-left: 8px; }
.deck-row { display: flex; gap: 6px; padding-top: 3px; }
.clock { width: 109px; height: 42px; padding: 3px 3px 0; border: 1px solid #b9bcc0; border-radius: 4px; background: #050607; color: #a8acb0; }
.clock small { display: block; font-size: 6px; line-height: 8px; color: #777b80; }
.clock strong { display: block; padding-left: 5px; font: 14px/17px "Liberation Sans", sans-serif; color: #c2c9d0; }
.clock p { font-size: 7px; line-height: 11px; white-space: nowrap; color: #8d9195; }
.clock b { color: #e0952a; }
.clock .e { margin-left: 6px; }
.drive { flex: 1; }
.drive-keys { display: flex; gap: 1px; padding: 1px 2px; border: 1px solid #b9bcc0; border-radius: 4px; background: #050607; }
.drive-keys button { flex: 1 0 28px; display: grid; place-items: center; height: 28px; background: linear-gradient(#aeb2b4, #7e8385); color: #44494c; border-radius: 2px; }
.drive-keys .w { flex-basis: 51px; }
.drive-keys svg { height: 10px; width: 16px; }
.jog { appearance: none; display: block; width: 100%; height: 8px; margin-top: 3px; background: linear-gradient(#060708, #060708) 0 50% / 100% 4px no-repeat; }
.jog::-webkit-slider-runnable-track { height: 4px; border: 1px solid #b9bcc0; border-radius: 2px; }
.jog::-webkit-slider-thumb { appearance: none; width: 17px; height: 7px; margin-top: -2px; background: #b9b9ad; border: 1px solid #555; }
.modes { display: grid; grid-template-columns: 25px 25px; grid-auto-rows: 11px; gap: 4px 2px; padding: 28px 0 0 5px; }
.modes button, .tempo button, .wheel button { background: linear-gradient(#3f4347, #2c2f32); color: #9da2a7; font: 8px/11px "Noto Sans", sans-serif; }
.modes .on { background: #8ec9f6; color: #16344e; }
.rule { width: 14px; margin-left: 4px; border-left: 1px solid #0a0b0c; padding: 29px 0 0 1px; }
.rule svg { width: 7px; height: 7px; }
.sync { display: grid; grid-template-columns: 19px 10px 10px; align-items: center; width: 46px; height: 27px; margin: 28px 0 0; padding: 1px 3px; border: 1px solid #c5c8cb; border-radius: 3px; background: #060708; line-height: 7px; }
.sync b { color: #eda01e; font-size: 7px; }
.sync i { width: 6px; height: 6px; border: 1px solid #6c7074; border-radius: 50%; background: #202224; }
.sync small { font-size: 6px; }
.tempo { display: grid; grid-template-columns: 20px 20px; grid-template-rows: 13px 12px; gap: 3px 3px; align-content: start; padding: 27px 0 0 5px; width: 54px; }
.sig { grid-column: 1 / -1; display: flex; align-items: center; justify-content: space-between; padding: 0 3px; background: #060708; color: #ddd; }
.sig svg { width: 6px; height: 6px; }
.tempo button { display: flex; align-items: center; justify-content: center; }
.tempo button svg { width: 9px; height: 9px; }
.wheel { display: grid; grid-template-columns: 21px 21px; justify-content: space-between; align-content: end; padding: 0 0 3px; width: 47px; position: relative; }
.wheel button { display: grid; place-items: center; height: 12px; }
.wheel button svg { width: 12px; height: 8px; }
.wheel i { position: absolute; left: 6px; top: 13px; width: 35px; height: 35px; border-radius: 50%; background: conic-gradient(#fff, #aaa 12%, #ddd 25%, #999 38%, #fff 50%, #b5b5b5 62%, #eee 75%, #999 88%, #fff); }
.meters { flex: 1; margin-left: 7px; background: #030404; }
.meters svg { height: 57px; width: 100%; }
.meters text { font: 8px "Liberation Sans", sans-serif; fill: #9ea2a6; text-anchor: middle; }
.meters .big { font-size: 13px; }

.status { display: flex; align-items: center; height: 12px; padding: 0 2px; background: linear-gradient(#fff, #dfdee6 3px); color: #222; line-height: 12px; }
.status span:first-child { flex: 1; }
.status .cache { width: 117px; padding-left: 26px; border-left: 1px solid #bbb; }
.status .now { width: 118px; padding-left: 3px; border-left: 1px solid #bbb; }

.combo { display: flex; position: relative; height: 15px; background: #fff; border: 1px solid #8ea5c0; color: #111; }
.combo select { flex: 1; width: 100%; padding: 0 2px; }
.combo::before { content: ""; position: absolute; right: 0; top: 0; bottom: 0; width: 11px; background: #c5d5ee; pointer-events: none; }
.combo::after { content: ""; position: absolute; right: 3px; top: 3px; width: 5px; height: 5px; border: solid #223; border-width: 0 2px 2px 0; rotate: 45deg; pointer-events: none; }
.ws { width: 84px; }

.dialog { position: absolute; left: 179px; top: 292px; width: 558px; padding: 0 2px 3px 4px; background: #e4e4ee; color: #fff; box-shadow: 1px 1px 0 #555; }
.dialog h2 { height: 16px; font: bold 8px/17px "Open Sans", sans-serif; color: #8f8f98; white-space: nowrap; background: linear-gradient(#fff, #e4e4ee 5px, #f4f4f8 12px, #d0d0dc); margin: 0 -2px 0 -4px; padding-left: 2px; }
.dlg-body { display: flex; gap: 5px; background: #8c8d90; padding: 1px 2px 1px 1px; }
.dlg-main { width: 438px; }
.dlg-grid { display: grid; grid-template-columns: 140px 67px 67px 97px 39px 28px; }
.heads { height: 13px; padding-bottom: 1px; grid-template-columns: 140px 231px 39px 28px; }
.h { display: flex; justify-content: center; align-items: center; margin: 0 3px; background: #636569; border: 1px solid #4c4d50; border-top-color: #aaa; font-size: 7px; }
.h.pos { gap: 9px; margin-left: 49px; justify-content: flex-end; padding-right: 1px; }
.h.len { display: grid; grid-template-columns: 45px 86px 64px 17px; text-align: center; margin-right: 13px; }
.h button { width: 17px; height: 8px; background: #9ccaf4; color: #fff; line-height: 7px; }
.row { height: 19px; align-items: center; background: linear-gradient(90deg, #868689, #a09a9c 40%, #8d9199); border-bottom: 1px solid #6e7074; }
.row.out { background: linear-gradient(90deg, #586a9e, #4c5f9e 30%, #6c80b0 60%, #4c5b92); border-color: #46538a; height: 20px; }
.row input { height: 12px; background: #fff; color: #111; text-align: center; border: 1px solid #666; border-right-color: #ddd; border-bottom-color: #ddd; }
.row > input { width: 44px; margin-left: 4px; }
.row > input:nth-of-type(3) { width: 31px; }
.row .grey, .scale .db { background: #5f6165; color: #ddd; }
.row .combo { width: 83px; margin-left: 4px; }
.where { display: flex; align-items: center; gap: 1px; }
.where b { flex: none; width: 48px; padding-left: 5px; font-weight: normal; white-space: nowrap; }
.where input { width: 47px; margin: 0 1px; }
.where button { flex: none; width: 12px; height: 11px; background: #e8e8e8; border: 1px solid #555; border-top-color: #fff; border-left-color: #fff; color: #111; font-weight: bold; line-height: 8px; }
.where button:last-child { background: #c3c4c6; font-size: 6px; font-weight: normal; }
.playkey { display: grid; place-items: center; width: 20px; height: 17px; margin: 0 auto; background: linear-gradient(135deg, #d4d6d9, #9a9ca0); border: 1px solid #6a6c70; color: #44474b; }
.playkey svg { width: 8px; height: 8px; }
.controls { height: 116px; background: linear-gradient(90deg, #7d7d80, #9b9292 30%, #8d9199 34%, #b2c1d8 60%, #8f96a3 84%, #7f8690); }
.modes-col { display: flex; gap: 3px; padding-left: 2px; border-right: 1px solid #66686b; font-size: 7px; line-height: 9px; color: #111; }
.modes-col b, .cap { color: #fff; font-weight: normal; }
.nudge { display: flex; flex-direction: column; gap: 3px; width: 42px; height: 50px; margin-top: 3px; padding: 1px 2px; border: 1px solid #a9a9aa; border-top-color: #66686b; border-left-color: #66686b; }
.nudge b { text-align: center; }
.modes-col label:not(.cap) { display: flex; align-items: center; gap: 3px; height: 9px; white-space: nowrap; }
.modes-col [type=radio] { appearance: none; flex: none; width: 6px; height: 6px; border-radius: 50%; background: radial-gradient(#ddd, #77797c); }
.modes-col [type=radio]:checked { background: radial-gradient(#d5ffd0, #2ed03a); }
.move { display: flex; flex-direction: column; gap: 3px; padding-top: 4px; width: 89px; }
.move label:not(.cap) { padding-left: 2px; }
.move #offset { width: 50px; height: 12px; margin-left: 27px; background: #fff; border: 1px solid #666; text-align: center; font-size: 8px; }
.move .combo { font-size: 8px; }
.faders { display: flex; gap: 2px; padding: 0 0 1px 4px; }
.fbox { display: flex; gap: 1px; padding-top: 5px; }
.fbox.blue { background: linear-gradient(#6b83b8, #8ba2cf); border: 1px solid #4c5d8c; padding-top: 4px; color: #e8eefa; }
.fbox:not(.blue) { color: #16181a; }
.fbox.blue .scale, .volume .scale { text-align: right; }
.volume { border-left: 1px solid #666b74; }
.scale { position: relative; display: flex; flex-direction: column; justify-content: space-between; width: 14px; height: 106px; padding: 2px 0 4px; line-height: 8px; font-size: 7px; white-space: nowrap; }
.scale em { position: absolute; bottom: -4px; right: 0; font-style: normal; line-height: 8px; }
.fbox:not(.blue) > input:first-child ~ .scale em { right: auto; left: 0; }
.scale span { height: 8px; }
.ticks { width: 3px; height: 93px; margin-top: 6px; background: repeating-linear-gradient(transparent 0 2px, rgb(20 25 35 / .5) 2px 3px); border-right: 1px solid currentColor; border-top: 1px solid currentColor; }
.shape .scale { width: 26px; display: grid; grid-template-rows: 11px 11px 10px 14px 23px 22px 8px; }
.shape .fbox:not(.blue) .scale { width: 32px; }
.shape .fbox:not(.blue) output { margin-left: 7px; }
.scale output { display: block; height: 10px; width: 25px; line-height: 8px; text-align: center; background: #fff; color: #111; border: 1px solid #555; }
.vr { appearance: none; writing-mode: vertical-lr; direction: rtl; width: 10px; height: 107px; background: linear-gradient(90deg, transparent 4px, #111 4px 7px, transparent 7px); }
.vr::-webkit-slider-thumb { appearance: none; width: 10px; height: 22px; border: 1px solid #555; background: linear-gradient(#e9e9e9 0 5px, #888 6px, #ddd 7px 9px, #3a3 10px, #9f2 11px, #ccc 12px 15px, #888 16px, #ddd 17px); }
.vr.plain::-webkit-slider-thumb, .vr.big::-webkit-slider-thumb { background: linear-gradient(#e9e9e9 0 5px, #888 6px, #ddd 7px 9px, #111 10px 11px, #ccc 12px 15px, #888 16px, #ddd 17px); }
.vr.big { height: 144px; width: 12px; }
.vr.big::-webkit-slider-thumb { width: 12px; height: 25px; }
.preview { display: flex; flex-direction: column; align-items: center; gap: 1px; padding-top: 2px; border: 1px solid #6d7179; border-width: 0 1px; text-align: center; font-size: 7px; line-height: 7px; }
.preview small { font-size: 6px; line-height: 7px; }
.preview .playkey { height: 22px; margin: 0 auto 12px; }
.preview label { margin-top: 3px; }
.dlg-foot { display: flex; align-items: center; height: 14px; gap: 2px; font-size: 7px; }
.dlg-foot label { display: flex; align-items: center; gap: 3px; white-space: nowrap; }
.btn { height: 12px; background: #e9e9ea; border: 1px solid #fff; border-right-color: #555; border-bottom-color: #555; color: #111; box-shadow: 1px 2px 1px #666; line-height: 9px; font-size: 7px; white-space: nowrap; }
.dlg-foot .btn { width: 50px; height: 9px; line-height: 7px; }
.dlg-foot .f-zoom { width: 150px; margin-left: 6px; }
.dlg-foot .f-align { width: 36px; }
.dlg-foot .f-keep { width: 46px; }
.dlg-foot .f-power { margin-left: 20px; }
.dlg-side { flex: 1; display: flex; flex-direction: column; gap: 3px; font-size: 7px; }
fieldset { margin: 0; min-width: 0; padding: 0 6px; border: 1px solid #aeb0b2; }
legend { padding: 0 2px; line-height: 9px; }
.snaps { display: grid; grid-template-columns: repeat(4, 21px); gap: 1px 3px; height: 45px; }
.snaps button { height: 16px; padding-top: 8px; line-height: 8px; background: linear-gradient(#e9e9ea, #e9e9ea) 0 1px / 100% 6px no-repeat, linear-gradient(#555, #555) 0 2px / 100% 6px no-repeat; }
.presets { display: grid; grid-template-columns: 38px 1fr; gap: 5px 7px; padding: 0 3px; height: 46px; }
.presets legend, .fades legend { margin-left: 3px; }
.fades legend { margin-left: 0; }
.presets .combo { grid-column: 1 / -1; height: 14px; }
.presets .btn { margin-left: 4px; height: 11px; }
.presets label, .fades label { display: flex; align-items: center; gap: 3px; height: 11px; }
.fades { display: grid; grid-template-columns: 38px 38px; justify-content: space-between; align-content: start; gap: 6px 3px; height: 46px; }
.fades label { margin-left: -2px; }
.fades .btn { height: 11px; }
.ends { display: flex; gap: 7px; padding: 12px 4px 0 10px; }
.ends .btn { flex: 1; }
```
FILE: app.js
```js
// Envelope keyframes in thirds of a pixel: x, y pairs.
const upperA = [0,35,13,-12,27,38,37,15,50,-12,57,20,70,-12,85,-14,95,-5,100,-12,113,40,125,5,133,-10,140,38,155,-12,165,25,180,-5,193,20,203,-10,215,-12,223,35,237,33,250,40,260,10,270,0,277,30,287,-10,300,25,313,-12,325,-5,335,0,345,20,357,35,365,38,370,-10,380,-5,390,40,400,-10,415,30,425,10,437,-12,445,30,455,35,465,0,475,40,487,40,490,0,500,-12,510,10,523,0,530,-10,543,35,550,-12,565,-10,590,-12,600,30,605,-12,625,0,655,-12,665,20,672,-12,685,20,700,25,710,40,725,40,727,-12,740,5,755,-10,765,-12,800,0,815,30,840,30,860,-10,875,25,900,45,935,55,975,58];
const upperB = [0,90,10,130,20,90,35,105,45,80,55,100,67,75,72,125,90,125,105,115,123,80,130,105,140,90,155,125,165,95,180,125,195,85,215,90,225,105,240,70,250,80,257,120,270,95,280,132,295,105,310,125,320,125,335,100,360,70,367,125,377,80,395,90,405,125,415,90,430,90,440,125,460,70,470,105,485,70,495,125,510,100,523,130,535,95,550,120,565,110,587,130,597,80,607,130,630,130,640,105,657,95,667,130,695,95,705,80,725,80,730,130,750,95,765,125,795,125,825,90,845,85,865,120,880,90,905,70,945,62,975,59];
const lowerA = [575,367,580,292,590,325,605,330,620,350,630,345,640,295,650,335,665,295,675,340,680,300,710,295,717,325,730,350,745,315,753,350,765,295,775,335,787,305,795,335,810,355,825,300,855,295,860,340,875,295,893,335,905,300,915,295,923,340,940,295,950,340,975,295,980,340,995,320,1020,310,1030,345,1045,320,1075,345,1083,295,1095,300,1110,340,1123,340,1130,295,1137,350,1150,300,1165,340,1175,305,1185,295,1200,340,1245,350,1260,350,1270,295,1280,320,1295,295,1305,295,1317,330,1335,295,1350,295,1360,330,1367,295,1377,340,1395,295,1405,335,1415,305,1430,325,1440,295,1453,300,1460,350,1475,310,1485,340,1497,300,1505,320,1525,345,1550,350,1557,295,1585,320,1610,345,1617,295,1630,345,1645,300,1657,345,1670,320,1677,295,1695,300,1703,350,1725,315,1740,340,1763,305,1783,350,1790,310,1805,300,1815,325,1840,345,1855,305,1885,320,1895,345,1910,300,1935,305,1950,340,1959,295];
const lowerB = [575,367,577,430,585,435,600,395,635,380,643,430,655,410,665,420,675,395,695,430,713,385,725,400,753,390,760,425,775,395,790,410,803,430,815,400,825,440,835,420,845,440,860,395,875,440,893,400,905,430,920,400,940,440,960,395,975,430,995,400,1015,400,1045,390,1070,395,1077,440,1090,430,1115,390,1130,395,1135,440,1150,400,1165,390,1177,430,1190,410,1205,440,1220,390,1255,385,1267,420,1280,390,1293,430,1305,395,1320,440,1335,420,1350,440,1365,395,1380,440,1395,420,1410,440,1420,395,1435,415,1445,385,1457,430,1470,390,1480,430,1495,400,1505,430,1525,410,1550,380,1557,435,1585,410,1610,395,1617,430,1640,395,1670,390,1677,435,1695,420,1703,390,1725,380,1740,420,1763,390,1785,380,1795,425,1815,390,1835,380,1847,425,1875,400,1895,385,1905,425,1945,385,1959,410];

let seed = 7;
const rnd = () => (seed = (seed * 16807) % 2147483647) / 2147483647 - 0.5;

function trace(keys, shift, top, bottom) {
  const out = [];
  const upper = keys === upperA || keys === upperB;
  for (let i = 0; i + 3 < keys.length; i += 2) {
    const [x0, y0, x1, y1] = [keys[i], keys[i + 1], keys[i + 2], keys[i + 3]];
    const n = Math.max(1, Math.round((x1 - x0) / 4));
    const calm = upper && x0 >= 900;
    for (let k = 0; k < n; k++) {
      const t = k / n;
      const y = (y0 + (y1 - y0) * t) / 3 + shift + rnd() * (calm ? 0.6 : 6);
      out.push([((x0 + (x1 - x0) * t) / 3).toFixed(1), Math.min(bottom, Math.max(top, y)).toFixed(1)]);
    }
  }
  return out;
}
const svgPath = (cls, d) => `<path class="${cls}" d="${d}"/>`;
const points = p => p.map(q => q.join(" ")).join("L");
function pair(a, b, shift, top, bottom) {
  const A = trace(a, shift, top, bottom), B = trace(b, shift, top, bottom);
  return svgPath("band", "M" + points(A) + "L" + points([...B].reverse()) + "z") + svgPath("wave", "M" + points(A)) + svgPath("wave", "M" + points(B));
}
document.getElementById("waves").innerHTML =
  pair(upperA, upperB, 6, 1, 103) + pair(upperA, upperB, 58, 52, 103) +
  pair(lowerA, lowerB, 6, 104, 156) + pair(lowerA, lowerB, 57, 155, 206);

// Peak meter: two bars with a shared decibel scale.
const marks = [[-70, 15], [-40, 44], [-35, 58], [-30, 77], [-25, 100], [-20, 125], [-15, 151], [-10, 178], [-5, 206], [0, 235], [5, 263], [9, 287]];
let m = "";
const rect = (x, y, w, h, f) => `<rect x="${x}" y="${y}" width="${w}" height="${h}" fill="${f}"/>`;
for (const [y, edge] of [[14, 7], [33, 49]]) {
  m += rect(15, y, 142, 10, "#1f5a0c") + rect(157, y, 12, 10, "#e0a21c");
  m += rect(15, edge, 170, 1, "#2d7a18") + rect(185, edge, 50, 1, "#b8841c") + rect(235, edge, 53, 1, "#c01818");
  const ty = edge === 7 ? 8 : 43;
  for (let x = 130; x < 288; x += 5.7) m += rect(x.toFixed(1), edge === 7 ? 8 : 46, 1, 3, "#777");
  for (const [v, x] of marks) m += rect(x, v === 0 ? (edge === 7 ? 8 : 34) : ty, v === 0 ? 1.5 : 1, v === 0 ? 15 : 6, v === 0 ? "#c08a20" : "#8c9094");
}
for (const [v, x] of marks) m += `<text x="${x}" y="32">${v}</text>`;
m += `<text x="7" y="46">R</text><text x="7" y="25">L</text>`;
for (const y of [21, 48]) m += `<text class="big" x="300" y="${y}">-0</text><text x="311" y="${y}">.1</text>`;
document.getElementById("meters").innerHTML = m;
```
